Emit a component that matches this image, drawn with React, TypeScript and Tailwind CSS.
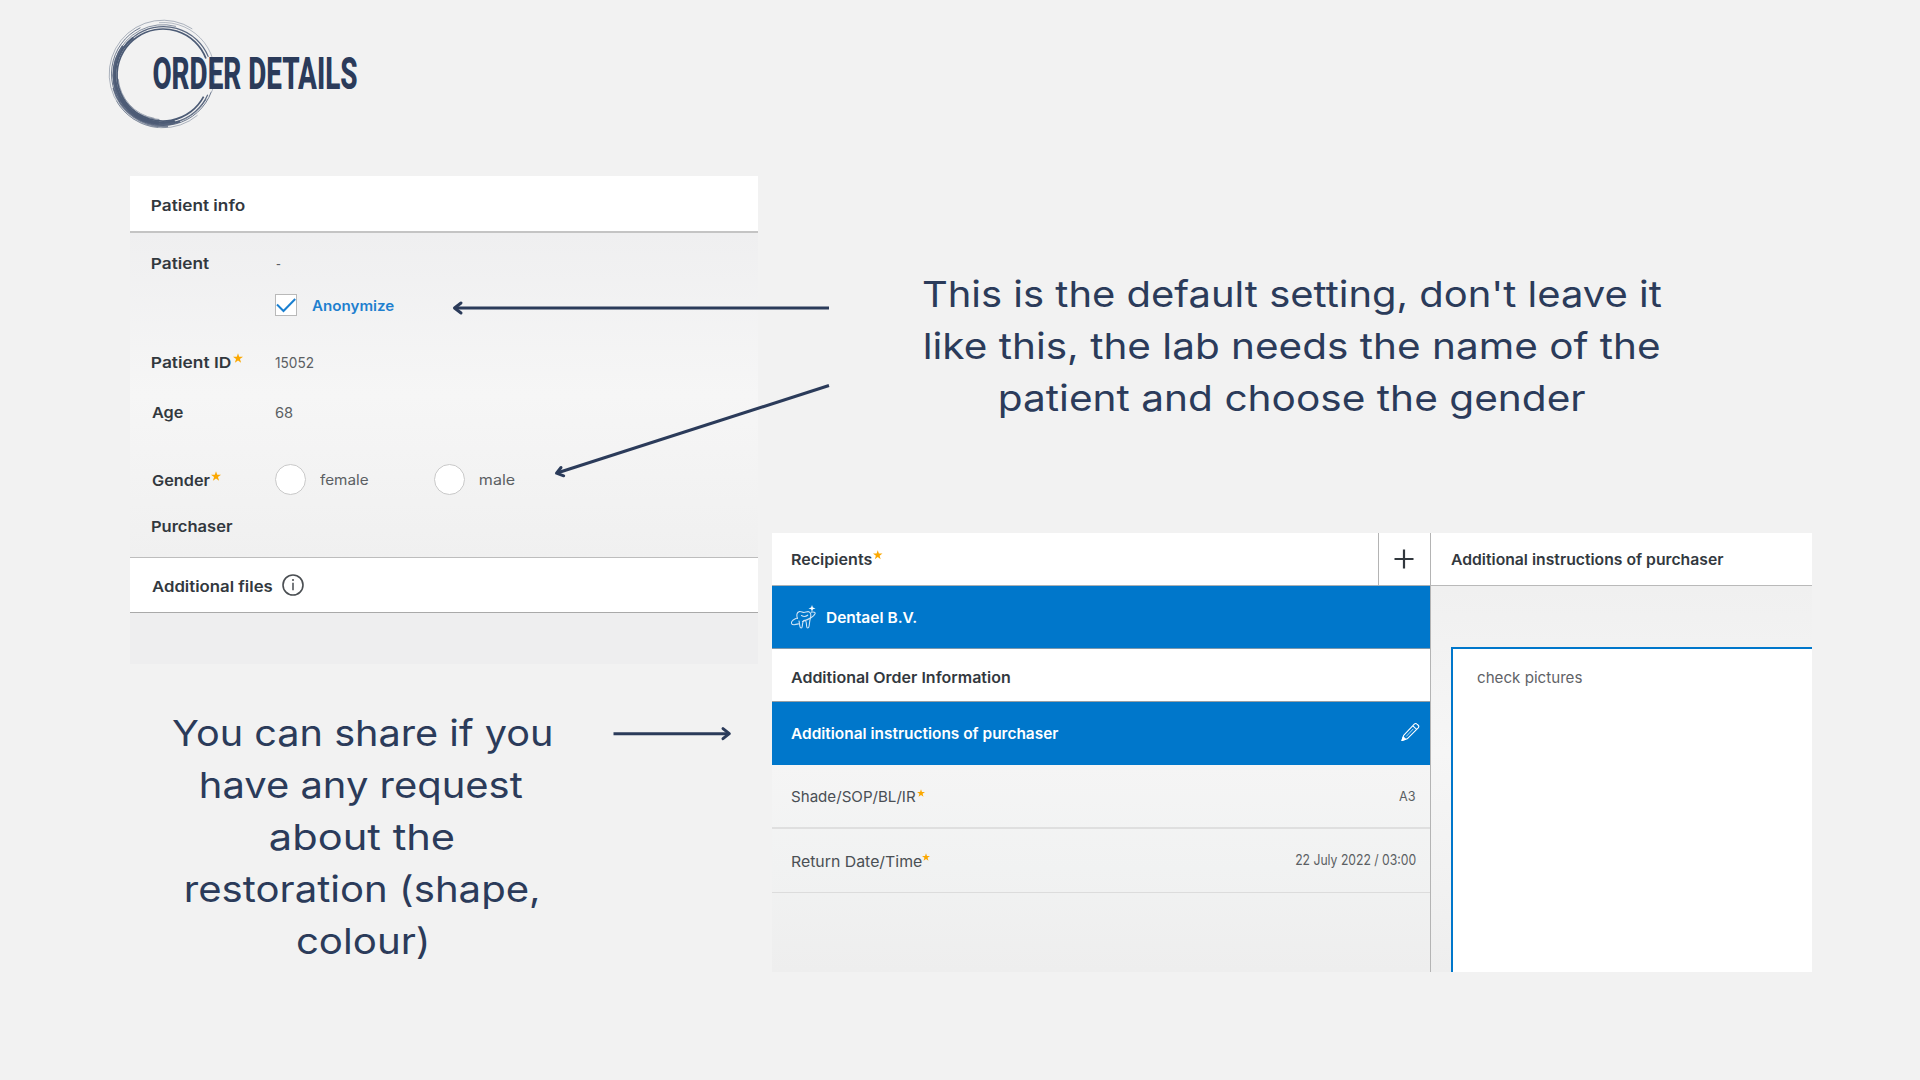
import { useLayoutEffect, useRef } from "react";
import type { ReactNode } from "react";

/** One line of text whose visible ink is stretched to exactly `w` pixels. */
function Fit({ w, className = "", children }: { w: number; className?: string; children: string }) {
  const ref = useRef<HTMLSpanElement>(null);
  useLayoutEffect(() => {
    const el = ref.current;
    const ctx = document.createElement("canvas").getContext("2d");
    if (!el || !ctx) return;
    const cs = getComputedStyle(el);
    ctx.font = `${cs.fontWeight} ${cs.fontSize} ${cs.fontFamily}`;
    const m = ctx.measureText(children);
    const s = w / (m.actualBoundingBoxLeft + m.actualBoundingBoxRight);
    el.style.transform = `translateX(${m.actualBoundingBoxLeft * s}px) scaleX(${s})`;
  }, [w, children]);
  return (
    <span className="block shrink-0" style={{ width: w }}>
      <span ref={ref} className={`inline-block origin-left whitespace-nowrap ${className}`}>
        {children}
      </span>
    </span>
  );
}

function Star({ className = "" }: { className?: string }) {
  return (
    <svg viewBox="0 0 20 19" className={`shrink-0 fill-[#fba800] ${className}`}>
      <path d="M10 0l2.4 7.1H20l-6.1 4.5L16.2 19 10 14.4 3.8 19l2.3-7.4L0 7.1h7.6z" />
    </svg>
  );
}

function Label({ w, children }: { w: number; children: string }) {
  return (
    <Fit w={w} className="text-[15px] leading-5 font-semibold text-[#32383e]">
      {children}
    </Fit>
  );
}

function Value({ w, children }: { w: number; children: string }) {
  return (
    <Fit w={w} className="text-[14px] leading-5 text-[#5b5f63]">
      {children}
    </Fit>
  );
}

function Row({ className, label, children }: { className: string; label?: ReactNode; children?: ReactNode }) {
  return (
    <div className={`flex items-center pl-[21.5px] ${className}`}>
      <div className="flex w-[123.5px] shrink-0 items-center gap-[1.5px]">{label}</div>
      {children}
    </div>
  );
}

function Radio() {
  return <span className="size-[31px] shrink-0 rounded-full border-[1.5px] border-[#c9c9c9] bg-white" />;
}

/** Clockwise arc between two angles in degrees, 0 pointing right. */
function arc(cx: number, cy: number, r: number, from: number, to: number) {
  const at = (deg: number) => {
    const a = (deg * Math.PI) / 180;
    return `${(cx + r * Math.cos(a)).toFixed(2)} ${(cy + r * Math.sin(a)).toFixed(2)}`;
  };
  return `M${at(from)}A${r} ${r} 0 ${to - from > 180 ? 1 : 0} 1 ${at(to)}`;
}

// cx, cy, r, from, to, width, opacity
const strokes: number[][] = [
  [59, 61, 46, 28, 339, 1.7, 1],
  [59.5, 61, 48.4, 24, 338, 1.2, 0.9],
  [59, 60.5, 49.8, 30, 285, 0.8, 0.8],
  [59, 60, 51.5, 20, 244, 1, 0.8],
  [59, 60, 53.8, 50, 303, 0.8, 0.55],
  [59.5, 60, 51.5, 265, 380, 0.7, 0.55],
  [58.5, 61, 47.500, 75, 232, 2.2, 1],
  [59, 61, 49.500, 70, 216, 2.2, 0.9],
  [59.5, 60.500, 52, 85, 165, 1.8, 0.75],
  [59, 60.5, 48.5, 95, 150, 3.5, 0.9],
  [57, 60, 45.5, 92, 205, 0.9, 0.75],
  [58, 61, 44, 100, 175, 0.8, 0.65],
  [59, 60, 53.8, 95, 150, 0.9, 0.5],
];

function BrushCircle() {
  return (
    <svg viewBox="0 0 120 120" className="absolute top-[14px] left-[104px] size-[120px]" fill="none" stroke="#4c5b75">
      {strokes.map(([cx, cy, r, from, to, width, opacity], i) => (
        <path key={i} d={arc(cx, cy, r, from, to)} strokeWidth={width} opacity={opacity} />
      ))}
    </svg>
  );
}

function ToothIcon() {
  return (
    <svg viewBox="0 0 25 24" className="h-6 w-[25px] shrink-0" fill="none" stroke="#cfe4f5" strokeWidth="1.1" strokeLinecap="round" strokeLinejoin="round">
      <path d="M6.500 13.500C5.300 10.500 5.600 7.200 8.300 6.600c2-.4 3 .9 4.700.9s3-1.300 4.800-.8c2.600.9 2.200 4.300 1.500 6.800-.7 2.300-.7 4.500-1.200 7.500-.3 2.600-2.200 2.600-2.500.3-.3-3 .1-6-2-6s-1.900 3-2.300 6c-.3 2.300-2.200 2.300-2.500-.3-.3-2-.4-3.500-.8-5" />
      <path d="M5.500 13.300c-3.400 1.500-5.400 3.600-5 5.100.5 1.600 3.500 1.500 7 .5M11.500 16.500c5.500-1.800 11.500-5.200 12.500-7.700.6-1.700-1.300-2-3.700-1.700M10.500 10.500c1.800 1.200 4.500 1 6.200-.3" />
      <path d="M21 0l.9 2.500 2.600.9-2.600.9-.9 2.500-.9-2.500-2.600-.9 2.600-.9z" fill="#fff" stroke="none" />
    </svg>
  );
}

function PencilIcon() {
  return (
    <svg viewBox="0 0 20 20" className="h-5 w-[19px] shrink-0 -translate-y-px" fill="none" stroke="#fff" strokeWidth="1.15" strokeLinejoin="round">
      <path d="M1 19l1.800-5.400L14 1.800c.9-.9 2-.9 2.800-.1l1.300 1.200c.8.8.8 1.900 0 2.800L6.500 17.200z" />
      <path d="M12.500 3.500l4 3.800" />
      <path d="M5.500 14.700l7.500-8" strokeWidth="0.8" />
      <path d="M1 19l1.300-3.900 2.700 2.600z" fill="#fff" />
    </svg>
  );
}

function Arrows() {
  return (
    <svg
      viewBox="0 0 1920 1080"
      className="pointer-events-none absolute inset-0 h-[1080px] w-[1920px]"
      fill="none"
      stroke="#2b3b5a"
      strokeWidth="3"
      strokeLinejoin="round"
    >
      <path d="M829 308H455" />
      <path d="M461 303L454.500 308l6.500 5" strokeLinecap="round" />
      <path d="M829 385.500L557 473" />
      <path d="M561 467.500L556.500 473.200l7.200 2.600" strokeLinecap="round" />
      <path d="M613.500 733.700H729" />
      <path d="M723 728.700l6.300 5-6.300 5" strokeLinecap="round" />
    </svg>
  );
}

const callout = "text-[36px] leading-[52.1px] font-normal text-[#2b3b5a]";

const defaultNote: [string, number][] = [
  ["This is the default setting, don't leave it", 739],
  ["like this, the lab needs the name of the", 734.5],
  ["patient and choose the gender", 585],
];

const shareNote: [string, number][] = [
  ["You can share if you", 379],
  ["have any request", 322],
  ["about the", 184],
  ["restoration (shape,", 352],
  ["colour)", 130],
];

function Note({ lines }: { lines: [string, number][] }) {
  return (
    <div className="flex flex-col items-center">
      {lines.map(([text, w]) => (
        <div key={text} className="h-[52.1px]">
          <Fit w={w} className={callout}>
            {text}
          </Fit>
        </div>
      ))}
    </div>
  );
}

function PatientPanel() {
  return (
    <section className="ml-[130px] h-[488px] w-[628px] bg-[#eeeeef]">
      <div className="flex h-[57px] items-center border-b-2 border-[#c4c4c4] bg-white pt-[2px] pl-[21.5px]">
        <Label w={93}>Patient info</Label>
      </div>
      <div className="h-[324px] bg-linear-to-b from-[#efeff0] via-[#f6f6f6] to-[#f0f0f0]">
        <Row className="h-[61px] pb-[2px]" label={<Label w={58}>Patient</Label>}>
          <span className="ml-px"><Value w={4.5}>-</Value></span>
        </Row>
        <Row className="h-[22px]">
          <span className="flex size-[22px] shrink-0 items-center justify-center border border-[#b9b9b9] bg-white">
            <svg viewBox="0 0 20 20" className="size-5" fill="none" stroke="#1a7fd0" strokeWidth="2">
              <path d="M1 9.500l6.500 6.500L19.200 4" />
            </svg>
          </span>
          <span className="ml-[15px]">
            <Fit w={82} className="text-[14px] leading-5 font-semibold text-[#1f80cf]">Anonymize</Fit>
          </span>
        </Row>
        <Row
          className="mt-[33px] h-[25px]"
          label={<><Label w={79.5}>Patient ID</Label><Star className="h-[10px] w-[10px] -translate-y-[4px]" /></>}
        >
          <Value w={38.5}>15052</Value>
        </Row>
        <Row className="mt-[25px] h-[25px]" label={<Label w={31.5}>Age</Label>}>
          <Value w={17.5}>68</Value>
        </Row>
        <Row
          className="mt-[40px] h-[31px]"
          label={
            <span className="flex items-center gap-[1.5px]">
              <Label w={58}>Gender</Label>
              <Star className="h-[10px] w-[10px] -translate-y-[4px]" />
            </span>
          }
        >
          <Radio />
          <span className="ml-[14px] w-[114px] -translate-y-px"><Value w={48.5}>female</Value></span>
          <Radio />
          <span className="ml-[15px] -translate-y-px"><Value w={35}>male</Value></span>
        </Row>
        <Row className="mt-[18px] h-[26px]" label={<Label w={80.5}>Purchaser</Label>} />
      </div>
      <div className="flex h-[56px] items-center border-t-[1.5px] border-b-[1.5px] border-t-[#bdbdbd] border-b-[#a9a9a9] bg-white pl-[21.500px]">
        <span className="pt-[1px]"><Label w={120.5}>Additional files</Label></span>
        <svg viewBox="0 0 22 22" className="ml-[10px] size-[22px]" fill="none" stroke="#4a4e52" strokeWidth="1.6">
          <circle cx="11" cy="11" r="10" />
          <path d="M11 8.800v7.400M11 5v2" strokeWidth="1.5" />
        </svg>
      </div>
    </section>
  );
}

function OrderPanel() {
  const white = "text-[15px] leading-5 font-semibold text-white";
  const item = "text-[15px] leading-5 text-[#4a4f54]";
  return (
    <section className="flex h-[439px] w-[1040px]">
      <div className="flex w-[658.5px] flex-col border-r border-[#b4b4b4] bg-[#eeeeee]">
        <div className="flex h-[53px] border-b border-[#a9b0b5] bg-white">
          <div className="flex w-[607px] items-center gap-[1.500px] border-r border-[#b4b4b4] pl-[19.5px]">
            <Label w={80}>Recipients</Label>
            <Star className="h-[9.5px] w-[9.5px] -translate-y-[4px]" />
          </div>
          <div className="flex flex-1 items-center justify-center">
            <svg viewBox="0 0 20 20" className="size-5" stroke="#32383e" strokeWidth="2.200">
              <path d="M10 .5v19M.5 10h19" />
            </svg>
          </div>
        </div>
        <div className="flex h-[63px] items-center gap-[11px] border-b border-[#7d98ac] bg-[#0077cb] pl-[19px]">
          <ToothIcon />
          <Fit w={89.5} className={white}>Dentael B.V.</Fit>
        </div>
        <div className="flex h-[53px] items-center border-b border-[#969ea4] bg-white pt-[3px] pl-[19px]">
          <Label w={219.5}>Additional Order Information</Label>
        </div>
        <div className="flex h-[63px] items-center justify-between bg-[#0077cb] pr-[10px] pb-px pl-[19px]">
          <Fit w={267.5} className={white}>Additional instructions of purchaser</Fit>
          <PencilIcon />
        </div>
        <div className="flex flex-1 flex-col bg-linear-to-b from-[#f5f5f5] via-[#f1f2f2] via-50% to-[#eeeeee]">
          <div className="flex h-[64px] items-center gap-px border-b-2 border-[#dfdfdf] pr-[14px] pl-[19px]">
            <Fit w={125} className={item}>Shade/SOP/BL/IR</Fit>
            <Star className="h-2 w-2 -translate-y-[3px]" />
            <span className="ml-auto -translate-y-px"><Fit w={16.5} className="text-[13px] leading-5 text-[#5b5f63]">A3</Fit></span>
          </div>
          <div className="flex h-[64px] items-center gap-px border-b border-[#dcdcdc] pr-[14px] pl-[19.5px]">
            <Fit w={129.5} className={item}>Return Date/Time</Fit>
            <Star className="h-2 w-2 -translate-y-[4px]" />
            <span className="ml-auto -translate-y-[2px]"><Fit w={119.5} className="text-[14px] leading-5 text-[#5b5f63]">22 July 2022 / 03:00</Fit></span>
          </div>
        </div>
      </div>
      <div className="flex flex-1 flex-col bg-linear-to-b from-[#eeeeee] via-[#f6f6f6] to-[#eeeeee]">
        <div className="flex h-[53px] shrink-0 items-center border-b border-[#b9b9b9] bg-white pl-[20.500px]">
          <Label w={272.5}>Additional instructions of purchaser</Label>
        </div>
        <div className="mt-[61px] ml-[20.5px] flex-1 border-t-2 border-l-2 border-[#0077cb] bg-white pt-[15.500px] pl-6">
          <Fit w={105.5} className="text-[15px] leading-5 text-[#5f6367]">check pictures</Fit>
        </div>
      </div>
    </section>
  );
}

export default function App() {
  return (
    <main className="relative h-[1080px] w-[1920px] overflow-hidden bg-[#f2f2f2] font-['Inter',sans-serif]">
      <header className="relative h-[176px] pt-[44px] pl-[153px]">
        <BrushCircle />
        <h1 className="relative">
          <Fit w={204} className="font-['Roboto',sans-serif] text-[45px] leading-[60px] font-extrabold text-[#2b3b5a]">
            ORDER DETAILS
          </Fit>
        </h1>
      </header>
      <div className="flex">
        <div className="w-[772px]">
          <PatientPanel />
          <div className="mt-[42.5px] ml-[130px] w-[463px]">
            <Note lines={shareNote} />
          </div>
        </div>
        <div className="w-[1040px]">
          <div className="h-[357px] pt-[92px]">
            <Note lines={defaultNote} />
          </div>
          <OrderPanel />
        </div>
      </div>
      <Arrows />
    </main>
  );
}
